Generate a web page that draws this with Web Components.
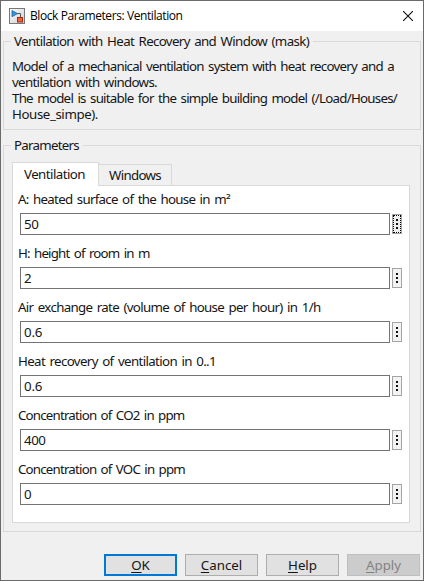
<!DOCTYPE html>
<html lang="en"><head><meta charset="utf-8"><title>Block Parameters: Ventilation</title>
<style>
html,body{margin:0;padding:0;overflow:hidden}
body{font:13.3px/16px "Noto Sans","Open Sans",sans-serif;word-spacing:1.6px;color:#151515}
</style></head><body><mask-dialog></mask-dialog>
<script>
const define=(name,html,ready)=>customElements.define(name,class extends HTMLElement{
  connectedCallback(){
    if(!this.shadowRoot)this.attachShadow({mode:'open'}).innerHTML=html;
    if(ready)ready(this,this.shadowRoot);
  }
});
// Text run whose letter spacing is adjusted to a given line width.
define('text-run','<style>:host{display:inline-block;white-space:pre;flex:none}</style><slot></slot>',el=>{
  el.style.letterSpacing='0';
  const want=+el.getAttribute('w'),n=el.textContent.length;
  if(want)el.style.letterSpacing=((want-el.getBoundingClientRect().width)/n)+'px';
});
define('block-icon',`<style>:host{display:block;width:16px;height:16px}svg{display:block}</style>
<svg width="16" height="16" viewBox="0 0 16 16"><defs><linearGradient id="g" x2="1" y2="1"><stop stop-color="#fff"/><stop offset="1" stop-color="#c9cdd2"/></linearGradient></defs>
<rect x=".5" y=".5" width="15" height="15" fill="url(#g)" stroke="#777"/>
<path d="M8 5.5h3.5V9" fill="none" stroke="#555"/><path d="M3 2.5v6.2L8.5 5.6z" fill="#2f9be0" stroke="#1c5f9c" stroke-width=".8"/>
<rect x="8.5" y="9.5" width="5" height="4.5" fill="#f0643c" stroke="#a82c12"/></svg>`);
define('title-bar',`<style>:host{display:flex;align-items:center;height:30px;box-sizing:border-box;padding:0 10px 1px 8px;background:#fff;font:12px/16px "Open Sans","Noto Sans",sans-serif;color:#000;word-spacing:0}
.title{flex:1;display:flex;margin:1px 0 0 5px}svg{display:block}</style>
<block-icon></block-icon><div class="title"><text-run w="152.5">Block Parameters: Ventilation</text-run></div>
<svg width="10" height="10" viewBox="0 0 10 10"><path d="M0 0L10 10M10 0L0 10" stroke="#111" stroke-width="1.1"/></svg>`);
define('group-box',`<style>:host{display:block;box-sizing:border-box}fieldset{box-sizing:border-box;height:100%;margin:0;padding:0 8px;border:1px solid #d9d9d9;min-width:0}
legend{padding:0 4px 0 3px;margin-left:-1px;height:16px}</style><fieldset><legend><slot name="legend"></slot></legend><slot></slot></fieldset>`);
define('param-field',`<style>:host{display:block;height:54px}
.label{height:22px;display:flex}.row{display:flex;align-items:center;gap:2px;margin-left:2px}
.input{box-sizing:border-box;width:370px;height:22px;border:1px solid #747474;padding:2px 4px 0 3px;background:#fff;line-height:16px}
.more{box-sizing:border-box;width:10px;height:20px;border:1px solid #a5a5a5;background:#f3f3f3;display:grid;place-content:center;gap:2px}
.more i{width:2px;height:2px;background:#111}
:host([focused]) .more{outline:1px dotted #000;outline-offset:-2px;background:#eee}
</style><div class="label"><slot></slot></div><div class="row"><div class="input"><slot name="value"></slot></div><div class="more"><i></i><i></i><i></i></div></div>`);
define('tab-label',`<style>:host{display:flex;box-sizing:border-box;height:21px;width:73px;border:1px solid #d9d9d9;border-width:1px 1px 0 0;padding:2px 0 0 10px;background:#f0f0f0}
:host([active]){width:87px;height:24px;margin-bottom:-1px;border-left-width:1px;padding:3px 0 0 11px;background:#fff;position:relative}</style><slot></slot>`);
define('push-button',`<style>:host{display:grid;place-content:center;box-sizing:border-box;width:73px;height:22px;border:1px solid #adadad;background:#e1e1e1}
:host([primary]){border:2px solid #0078d7}:host([disabled]){border-color:#bfbfbf;background:#ccc;color:#838383}
::slotted(u){text-underline-offset:2px;text-decoration-skip-ink:none}</style><span><slot></slot></span>`);
const fields=[['A: heated surface of the house in m<span style="font-family:\'DejaVu Sans\';line-height:0">²</span>','50',212.5],['H: height of room in m','2',131.5],['Air exchange rate (volume of house per hour) in 1/h','0.6',302.5],['Heat recovery of ventilation in 0..1','0.6',198],['Concentration of CO2 in ppm','400',166.5],['Concentration of VOC in ppm','0',167]];
define('mask-dialog',`<style>:host{display:block;box-sizing:border-box;width:424px;height:581px;border:1px solid #6a6a6a;background:#f0f0f0}
group-box{width:418px;margin-left:2px}.about{margin-top:2px;height:97px}.params{margin-top:7px;height:395px}
.desc{margin-top:9px}.desc text-run{display:block;width:max-content}
.tabs{display:flex;align-items:flex-end;height:23px;margin-top:9px}
.panel{box-sizing:border-box;width:398px;height:338px;border:1px solid #d9d9d9;background:#fff;padding:5px 0 0 5px}
.buttons{display:flex;justify-content:flex-end;gap:8px;padding:22px 3px 0 0}
</style><title-bar></title-bar>
<group-box class="about"><text-run slot="legend" w="295">Ventilation with Heat Recovery and Window (mask)</text-run>
<div class="desc"><text-run w="382">Model of a mechanical ventilation system with heat recovery and a</text-run><text-run w="145">ventilation with windows.</text-run><text-run w="385">The model is suitable for the simple building model (/Load/Houses/</text-run><text-run w="86">House_simpe).</text-run></div></group-box>
<group-box class="params"><text-run slot="legend" w="65">Parameters</text-run>
<div class="tabs"><tab-label active><text-run w="61">Ventilation</text-run></tab-label><tab-label><text-run w="52">Windows</text-run></tab-label></div>
<div class="panel">${fields.map((f,i)=>`<param-field ${i?'':'focused'}><text-run w="${f[2]}">${f[0]}</text-run><text-run slot="value" w="${{'0':7.3,'2':7.3,'50':14.5,'400':21.5,'0.6':18.3}[f[1]]}">${f[1]}</text-run></param-field>`).join('')}</div></group-box>
<div class="buttons"><push-button primary><u>O</u>K</push-button><push-button><u>C</u>ancel</push-button><push-button><u>H</u>elp</push-button><push-button disabled><u>A</u>pply</push-button></div>`);
</script></body></html>
